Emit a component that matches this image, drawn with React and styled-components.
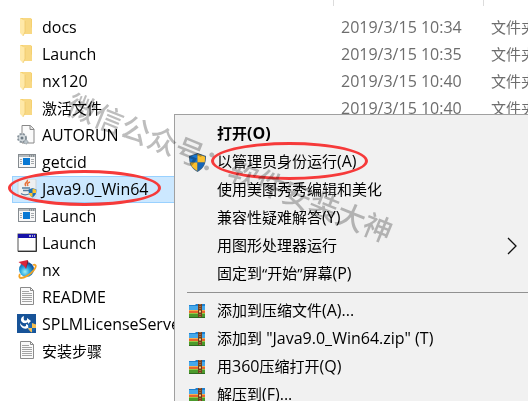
import React from 'react'
import styled, { createGlobalStyle } from 'styled-components'

// Styles
const GlobalStyle = createGlobalStyle`
    body {
        margin: 0;
        background-color: #fff;
        font-family: "Open Sans", "Noto Sans CJK SC", sans-serif;
        font-size: 15px;
        color: #000;
    }
`
const Window = styled.main`
    position: relative;
    height: 100vh;
    overflow: hidden;
`
const FileTable = styled.table`
    width: calc(100% - 12px);
    margin-left: 12px;
    table-layout: fixed;
    border-collapse: collapse;
`
const HeadCell = styled.th`
    width: ${({ $width }) => $width || 'auto'};
    height: 14px;
    padding: 0;
`
const Divider = styled.span`
    display: block;
    height: 6px;
    margin-bottom: 8px;
    border-right: ${({ $last }) => ($last ? 'none' : '1px solid #dcdcdc')};
`
const FileRow = styled.tr`
    height: 27px;
    background-color: ${({ $selected }) => ($selected ? '#cce8ff' : 'transparent')};
    box-shadow: ${({ $selected }) => ($selected ? 'inset 0 0 0 1px #99d1ff' : 'none')};
`
const Cell = styled.td`
    height: 27px;
    padding: 0 0 0 7px;
    line-height: 27px;
    color: #6d6d6d;
    white-space: nowrap;
`
const NameCell = styled(Cell)`
    padding: 0 0 0 5px;
    color: #000;
`
const FileName = styled.div`
    position: relative;
    display: flex;
    align-items: center;
    gap: 5px;
    height: 27px;
`
const Latin = styled.span`
    font-size: 16px;
`
const Icon = styled.svg`
    display: block;
    flex: none;
    width: 20px;
    height: 21px;
`
const Ring = styled.span`
    position: absolute;
    left: ${({ $left }) => $left};
    top: -6px;
    width: ${({ $width }) => $width};
    height: ${({ $height }) => $height};
    box-sizing: border-box;
    border: 3px solid #f63a3a;
    border-radius: 50%;
    pointer-events: none;
`
const Menu = styled.ul`
    position: absolute;
    left: 174px;
    top: 114px;
    right: 0;
    margin: 0;
    padding: 5px 0;
    list-style: none;
    background-color: #f1f1f1;
    border: 1px solid #a0a0a0;
    border-right: none;
`
const MenuItem = styled.li`
    position: relative;
`
const MenuButton = styled.button`
    display: flex;
    align-items: center;
    gap: 9px;
    width: 100%;
    height: 28px;
    padding: 0 11px 0 13px;
    border: none;
    background: none;
    font: inherit;
    font-weight: ${({ $bold }) => ($bold ? 700 : 400)};
    line-height: 26px;
    color: #000;
    text-align: left;
    white-space: nowrap;
    &:hover{
        background-color: #fff;
    }
`
const IconSlot = styled.span`
    flex: none;
    width: 20px;
`
const Label = styled.span`
    flex: 1;
    padding-bottom: 2px;
`
const Arrow = styled.svg`
    width: 10px;
    height: 18px;
    fill: none;
    stroke: #111;
    stroke-width: 1.3;
`
const Separator = styled.li`
    height: 1px;
    margin: 4px 0 4px 12px;
    background-color: #919191;
`
const Watermark = styled.div`
    position: absolute;
    left: 56px;
    top: 147px;
    font-size: 29px;
    line-height: 42px;
    font-weight: 500;
    color: #bdbdbd;
    white-space: nowrap;
    transform: rotate(22deg);
    mix-blend-mode: multiply;
    pointer-events: none;
`

// Icons
const FolderIcon = () => (
    <Icon viewBox="0 0 20 21" aria-hidden="true">
        <path d="M3 1h10l2 1v15H6l-3-2z" fill="#f5d06f" />
        <path d="M6 1h8v9l1 1v6H7z" fill="#f8d883" />
        <path d="M3 1l5 3v11l-2 4-3-3z" fill="#ffe9a8" />
        <path d="M8 4v11l-2 4" fill="none" stroke="#ecc565" strokeWidth=".7" />
    </Icon>
)

const ConfigIcon = () => (
    <Icon viewBox="0 0 20 21" aria-hidden="true">
        <path d="M5 .5h8.500l3.500 3.500v14H5z" fill="#fafafa" stroke="#888" />
        <path d="M13 .5v4h4" fill="#e4e4e4" stroke="#888" />
        <circle cx="5" cy="13" r="4" fill="#c3cbd1" stroke="#87929a" strokeWidth="2" strokeDasharray="2 1.2" />
        <circle cx="5" cy="13" r="3" fill="#d5dbdf" />
        <circle cx="5" cy="13" r="1.500" fill="#6c7983" />
        <circle cx="9" cy="17" r="2" fill="#bac3c9" stroke="#87929a" strokeDasharray="1 1" />
    </Icon>
)

const AppIcon = () => (
    <Icon viewBox="0 0 20 21" aria-hidden="true">
        <rect x="1.500" y="2.500" width="17" height="13" fill="#f7f7f7" stroke="#858b90" />
        <path d="M2 4h16" stroke="#b5babd" strokeWidth="2" />
        <path d="M12 4h1M14 4h1M16 4h1" stroke="#5f666b" />
        <path d="M3 7.500h2M3 9.500h2M3 11.500h2M14 7.500h3M14 9.500h3M14 11.500h3" stroke="#a5a9ac" />
        <rect x="6" y="6" width="7" height="7" fill="#0878d3" />
    </Icon>
)

const JavaIcon = () => (
    <Icon viewBox="0 0 20 21" aria-hidden="true">
        <rect x="1" y="0" width="18" height="18" rx="1" fill="#eef0f1" stroke="#cfd4d7" />
        <path d="M10 1c2 2-4 3-1 6M13 3c-3 1-3 2-2 4" fill="none" stroke="#e8733a" strokeWidth="1.500" />
        <path d="M5 9h8M6 11.500h6M4 14.500c3 2 7 1 9 0" fill="none" stroke="#577d9d" strokeWidth="1.300" />
        <path d="M15.500 9l4 1.500c0 4-1 6-4 8-3-2-4-4-4-8z" fill="#1f6fb8" />
        <path d="M15.500 9.500l3.500 1.300V14h-3.500zM12 14h3.500v4C13 17 12 15.500 12 14z" fill="#f9c22e" />
    </Icon>
)

const ConsoleIcon = () => (
    <Icon viewBox="0 0 20 21" aria-hidden="true">
        <rect x="1" y="1" width="18" height="17" fill="#fff" stroke="#555" />
        <rect x="1" y="1" width="18" height="4" fill="#1712a8" />
        <path d="M12 3h2M15 3h1M17 3h1" stroke="#e1e1e1" strokeWidth="1.500" />
        <path d="M19.500 1v17.500H1" fill="none" stroke="#333" />
    </Icon>
)

const GlobeIcon = () => (
    <Icon viewBox="0 0 20 21" aria-hidden="true">
        <defs>
            <radialGradient id="globe" cx=".4" cy=".65" r=".65">
                <stop offset="0" stopColor="#9ff0f4" />
                <stop offset=".5" stopColor="#25a3dd" />
                <stop offset="1" stopColor="#124995" />
            </radialGradient>
        </defs>
        <circle cx="9.500" cy="9.500" r="7.500" fill="url(#globe)" />
        <path d="M16 5c3-1 4 1 1 5-4 5-10 8-13 8-2 0-2-2-1-4" fill="none" stroke="#f2a324" strokeWidth="1.800" />
        <path d="M1.500 2l9-2 .5 1-2 8-2-3z" fill="#d9263a" />
        <path d="M10.500 0l.8 1.500L9 9z" fill="#7d1320" />
    </Icon>
)

const TextIcon = () => (
    <Icon viewBox="0 0 20 21" aria-hidden="true">
        <path d="M3.500 .5h10l3 3v14h-13z" fill="#fafafa" stroke="#8b8b8b" />
        <path d="M13.500 .5v3h3" fill="none" stroke="#8b8b8b" />
        <path d="M5 4.500h7M5 6.500h10M5 8.500h10M5 10.500h10M5 12.500h10M5 14.500h10" stroke="#a4a4a4" />
    </Icon>
)

const InstallerIcon = () => (
    <Icon viewBox="0 0 20 21" aria-hidden="true">
        <rect x="0" y="0" width="19" height="19" fill="#175398" />
        <path d="M7 2C4 3 3 6 5 8s5 1 6 0l0 2 3-3-4-3 0 2c-2 1-4 1-3-4z" fill="#fff" />
        <path d="M3 9c0 4 4 7 8 5v2l2-4-4-2v2c-2 1-4 0-6-3z" fill="#fff" />
        <path d="M15 9l4 1.500c0 4-1 6-4 8-3-2-4-4-4-8z" fill="#1b67b1" />
        <path d="M15 9l4 1.500V14h-4zM11.500 14H15v4.500c-2-1-3.200-2.500-3.500-4.500z" fill="#f7c052" />
    </Icon>
)

const ShieldIcon = () => (
    <Icon viewBox="0 0 20 21" aria-hidden="true">
        <path d="M9.500 1L18 4c0 8-2 12-8.500 16C3 16 1 12 1 4z" fill="#3c5f7d" />
        <path d="M9.500 2v8.500H2.200C2 8.500 2 6.500 2 4.700z" fill="#1976d1" />
        <path d="M9.500 2L17 4.700c0 2 0 4-.3 5.800H9.500z" fill="#fbc02d" />
        <path d="M2.200 10.500h7.300V19c-4.500-2.600-6.500-5-7.300-8.500z" fill="#fbc02d" />
        <path d="M16.700 10.500H9.500V19c4.500-2.600 6.400-5 7.200-8.500z" fill="#1565b8" />
    </Icon>
)

const ArchiveIcon = () => (
    <Icon viewBox="0 0 20 21" aria-hidden="true">
        <path d="M1 4h6l1-1h9v5H1z" fill="#1e80cf" />
        <path d="M1 5h16v4H1z" fill="#45a8ea" />
        <path d="M1 9h16v3H1z" fill="#e8662d" />
        <path d="M1 9h16v1H1z" fill="#f5ad50" />
        <path d="M1 12h16v4H1z" fill="#4b9a2c" />
        <path d="M1 12h16v1H1z" fill="#94cc45" />
        <rect x="10" y="3" width="4" height="13" fill="#77401f" />
        <path d="M12 3v13" stroke="#c99a62" strokeDasharray="1 1" />
        <rect x="10.500" y="9" width="3" height="3" fill="#f0cf87" stroke="#6b3a19" />
        <path d="M1 16.500h16" stroke="#2f6a20" />
    </Icon>
)

const files = [
    { name: 'docs', icon: FolderIcon, date: '2019/3/15 10:34', type: '文件夹' },
    { name: 'Launch', icon: FolderIcon, date: '2019/3/15 10:35', type: '文件夹' },
    { name: 'nx120', icon: FolderIcon, date: '2019/3/15 10:40', type: '文件夹' },
    { name: '激活文件', icon: FolderIcon, date: '2019/3/15 10:40', type: '文件夹' },
    { name: 'AUTORUN', icon: ConfigIcon },
    { name: 'getcid', icon: AppIcon },
    { name: 'Java9.0_Win64', icon: JavaIcon, selected: true },
    { name: 'Launch', icon: AppIcon },
    { name: 'Launch', icon: ConsoleIcon },
    { name: 'nx', icon: GlobeIcon },
    { name: 'README', icon: TextIcon },
    { name: 'SPLMLicenseServer', icon: InstallerIcon },
    { name: '安装步骤', icon: TextIcon },
]

const openItems = [
    { label: '打开(O)', bold: true },
    { label: '以管理员身份运行(A)', icon: ShieldIcon, marked: true },
    { label: '使用美图秀秀编辑和美化' },
    { label: '兼容性疑难解答(Y)' },
    { label: '用图形处理器运行', submenu: true },
    { label: '固定到“开始”屏幕(P)' },
]

const archiveItems = [
    { label: '添加到压缩文件(A)...', icon: ArchiveIcon },
    { label: '添加到 "Java9.0_Win64.zip" (T)', icon: ArchiveIcon },
    { label: '用360压缩打开(Q)', icon: ArchiveIcon },
    { label: '解压到(F)...', icon: ArchiveIcon },
]

// Latin runs are set one size larger than the Chinese around them
const MixedText = ({ children = '' }) =>
    children.split(/([ -~]+)/).map((run, i) => (i % 2 ? <Latin key={i}>{run}</Latin> : run))

const Item = ({ item }) => (
    <MenuItem>
        <MenuButton type="button" $bold={item.bold}>
            <IconSlot>{item.icon && <item.icon />}</IconSlot>
            <Label><MixedText>{item.label}</MixedText></Label>
            {item.submenu && (
                <Arrow viewBox="0 0 10 18" aria-hidden="true">
                    <path d="M1 1l8 8-8 8" />
                </Arrow>
            )}
        </MenuButton>
        {item.marked && <Ring $left="36px" $width="157px" $height="38px" />}
    </MenuItem>
)

const App = () => {
    return (
        <Window>
            <GlobalStyle />
            <FileTable>
                <thead>
                    <tr>
                        <HeadCell $width="322px"><Divider /></HeadCell>
                        <HeadCell $width="150px"><Divider /></HeadCell>
                        <HeadCell><Divider $last /></HeadCell>
                    </tr>
                </thead>
                <tbody>
                    {files.map((file, i) => (
                        <FileRow key={i} $selected={file.selected}>
                            <NameCell>
                                <FileName>
                                    <file.icon />
                                    <span><MixedText>{file.name}</MixedText></span>
                                    {file.selected && <Ring $left="-9px" $width="153px" $height="36px" />}
                                </FileName>
                            </NameCell>
                            <Cell><MixedText>{file.date}</MixedText></Cell>
                            <Cell>{file.type}</Cell>
                        </FileRow>
                    ))}
                </tbody>
            </FileTable>
            <Menu>
                {openItems.map((item) => <Item key={item.label} item={item} />)}
                <Separator role="separator" />
                {archiveItems.map((item) => <Item key={item.label} item={item} />)}
            </Menu>
            <Watermark>微信公众号：软件安装大神</Watermark>
        </Window>
    )
}

export default App
